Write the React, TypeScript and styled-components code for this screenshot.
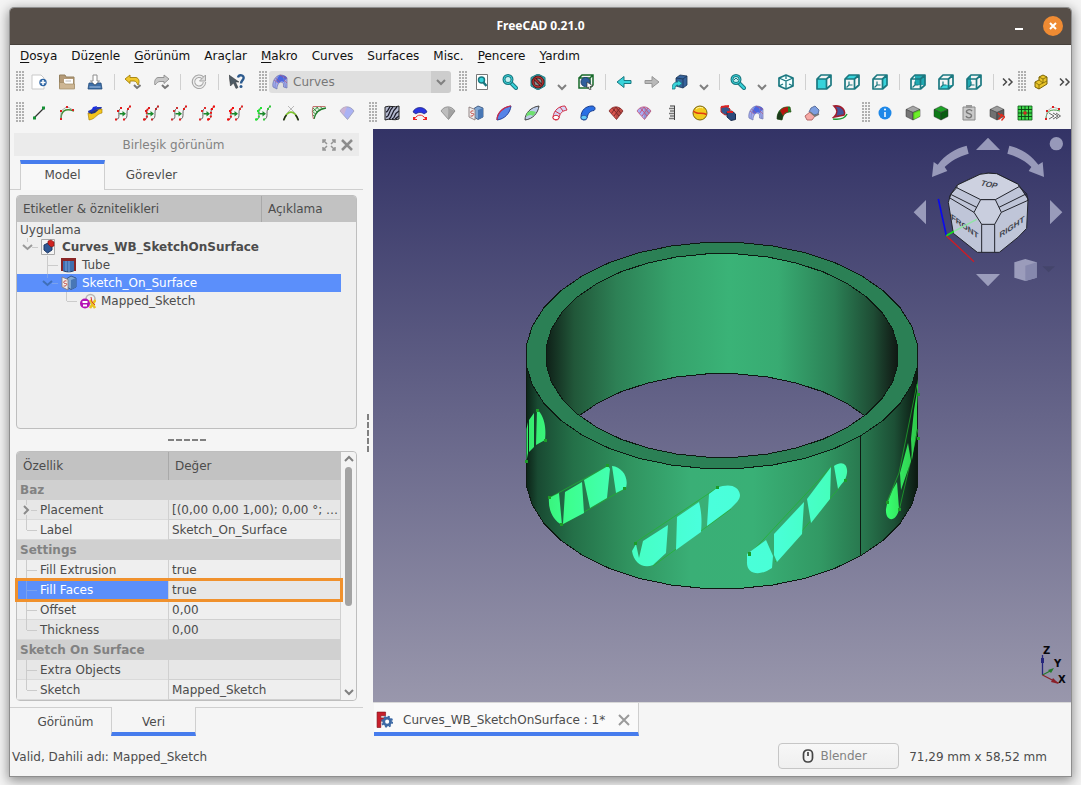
import React from "react";
import styled, { createGlobalStyle, css } from "styled-components";

const Global = createGlobalStyle`
  * { box-sizing: border-box; }
  body {
    margin: 0;
    background: #f4f4f4;
    font-family: "DejaVu Sans", Verdana, sans-serif;
    font-size: 12px;
    line-height: 16px;
    color: #4c4c4c;
  }
  button, select { font: inherit; color: inherit; }
`;

/* ---------- window frame ---------- */

const Desktop = styled.div`
  min-height: 100vh;
  padding: 8px 10px 9px;
  display: flex;
`;

const Window = styled.div`
  flex: 1;
  min-width: 0;
  display: flex;
  flex-direction: column;
  background: #f5f5f5;
  border-radius: 4px 4px 0 0;
  box-shadow: 0 0 0 1px #8e8e8e, 0 3px 12px 2px rgba(0, 0, 0, 0.42);
`;

const TitleBar = styled.header`
  height: 37px;
  display: grid;
  grid-template-columns: 1fr auto 1fr;
  align-items: center;
  padding: 0 8px;
  background: #564e48;
  border-bottom: 1px solid #46403b;
  border-radius: 4px 4px 0 0;
`;

const Title = styled.h1`
  grid-column: 2;
  margin: 0;
  font: 700 12px/16px "Noto Sans", sans-serif;
  color: #fff;
`;

const WindowControls = styled.div`
  display: flex;
  justify-content: flex-end;
  align-items: center;
  gap: 14px;
`;

const FrameButton = styled.button<{ $round?: boolean }>`
  width: 20px;
  height: 20px;
  padding: 0;
  border: 0;
  border-radius: 50%;
  display: grid;
  place-items: center;
  background: ${(p) => (p.$round ? "#ef8b33" : "transparent")};
`;

/* ---------- menu ---------- */

const MenuBar = styled.nav`
  height: 22px;
  display: flex;
  align-items: center;
  gap: 14px;
  padding: 0 10px;
`;

const MenuItem = styled.button`
  padding: 0;
  border: 0;
  background: none;
  color: #111;
  white-space: nowrap;
`;

const Mnemonic = styled.span`
  text-decoration: underline;
  text-underline-offset: 2px;
`;

/* ---------- tool bars ---------- */

const ToolRow = styled.div<{ $tall?: boolean }>`
  height: ${(p) => (p.$tall ? 33 : 29)}px;
  display: flex;
  align-items: center;
  gap: 8px;
  padding-left: 6px;
  overflow: hidden;
`;

const ToolBar = styled.div`
  display: flex;
  align-items: center;
  flex: none;
`;

const Grip = styled.span`
  width: 9px;
  height: 21px;
  background:
    linear-gradient(90deg, transparent 2px, #f5f5f5 2px) 0 0 / 3px 3px,
    linear-gradient(#b0b0b0 2px, transparent 2px) 0 0 / 3px 3px;
`;

const ToolButton = styled.button`
  width: 28px;
  height: 26px;
  padding: 0;
  border: 0;
  background: none;
  display: grid;
  place-items: center;
`;

const SplitTool = styled.div`
  width: 48px;
  display: flex;
  align-items: center;
`;

const SplitArrow = styled.button`
  width: 20px;
  height: 26px;
  padding: 10px 0 0;
  border: 0;
  background: none;
  display: grid;
  place-items: center;
`;

const Divider = styled.span`
  width: 10px;
  height: 16px;
  background: linear-gradient(#d0d0d0, #d0d0d0) center / 1px 100% no-repeat;
`;

const More = styled.button`
  width: 20px;
  height: 26px;
  padding: 0;
  border: 0;
  background: none;
  display: grid;
  place-items: center;
`;

const Workbench = styled.label`
  display: flex;
  align-items: center;
  position: relative;
  width: 182px;
  height: 22px;
  margin-left: 1px;
  border-radius: 3px;
  background: linear-gradient(90deg, #dfdfdf 162px, #cdcdcd 162px);
  > svg { position: absolute; left: 3px; pointer-events: none; }
  > svg:last-child { left: auto; right: 5px; }
`;

const WorkbenchSelect = styled.select`
  width: 100%;
  height: 100%;
  padding: 0 24px;
  appearance: none;
  border: 0;
  background: none;
  color: #777;
`;

/* ---------- body ---------- */

const Body = styled.main`
  flex: 1;
  display: grid;
  grid-template-columns: 353px 10px minmax(0, 1fr);
`;

const Dock = styled.section`
  display: flex;
  flex-direction: column;
  padding-top: 4px;
`;

const DockTitle = styled.div`
  height: 23px;
  margin: 0 4px;
  padding: 0 5px;
  display: grid;
  grid-template-columns: 10px 1fr 36px;
  align-items: center;
  text-align: center;
  background: #ebebeb;
  color: #828282;
`;

const DockButtons = styled.div`
  display: flex;
  justify-content: flex-end;
  gap: 4px;
`;

const TinyButton = styled.button`
  padding: 0;
  border: 0;
  background: none;
  display: grid;
  place-items: center;
`;

const TabStrip = styled.div<{ $bottom?: boolean }>`
  display: flex;
  height: ${(p) => (p.$bottom ? 29 : 30)}px;
  margin-top: ${(p) => (p.$bottom ? 6 : 4)}px;
  &::before { content: ""; width: 10px; }
  &::after { content: ""; flex: 1; }
  &::before, &::after {
    border-${(p) => (p.$bottom ? "top" : "bottom")}: 1px solid #cfcfcf;
  }
`;

const Tab = styled.button<{ $on?: boolean; $bottom?: boolean; $width: number }>`
  width: ${(p) => p.$width}px;
  padding: 0;
  background: ${(p) => (p.$on && !p.$bottom ? "#f8f8f8" : "none")};
  border: 0 solid #cfcfcf;
  ${(p) => (p.$bottom ? "border-top-width" : "border-bottom-width")}: 1px;
  ${(p) => p.$on && css`
    border-width: 0 1px;
    ${p.$bottom ? "border-bottom" : "border-top"}: 4px solid #467ced;
    ${p.$bottom ? "padding-top" : "padding-bottom"}: 5px;
  `}
`;

const TreeBox = styled.div`
  flex: 1;
  margin: 5px 6px 0;
  border: 1px solid #bebebe;
  border-radius: 4px;
  background: #efefef;
`;

const TreeHeader = styled.div`
  height: 26px;
  display: grid;
  grid-template-columns: 244px 1fr;
  align-items: center;
  background: #c2c2c2;
  border-radius: 3px 3px 0 0;
  > span { padding: 0 6px; line-height: 26px; }
  > span + span { border-left: 1px solid #a9a9a9; }
`;

const Tree = styled.ul`
  list-style: none;
  margin: 0;
  padding: 0;
`;

const TreeRoot = styled.li`
  height: 16px;
  padding-left: 3px;
`;

const TreeItem = styled.li<{ $on?: boolean; $bold?: boolean }>`
  height: 18px;
  margin-right: 15px;
  display: flex;
  align-items: center;
  ${(p) => p.$on && css`background: #5b8ffb; color: #fff;`}
  ${(p) => p.$bold && css`font-weight: 700;`}
`;

const NodeIcon = styled.span`
  width: 21px;
  display: grid;
  justify-items: start;
`;

const HandleRow = styled.div`
  height: 22px;
  display: grid;
  place-items: center;
`;

const HandleColumn = styled.div`
  display: grid;
  place-items: center;
`;

const Dashes = styled.span<{ $vertical?: boolean }>`
  ${(p) => p.$vertical
    ? css`width: 2px; height: 38px; background: repeating-linear-gradient(#808080 0 6px, transparent 6px 8px);`
    : css`width: 38px; height: 2px; background: repeating-linear-gradient(90deg, #808080 0 6px, transparent 6px 8px);`}
`;

const PropertyBox = styled.div`
  margin: 0 6px;
  display: flex;
  border: 1px solid #bebebe;
  border-radius: 4px;
  background: #f5f5f5;
`;

const PropertyTable = styled.table`
  flex: 1;
  position: relative;
  z-index: 1;
  table-layout: fixed;
  width: 324px;
  border-collapse: separate;
  border-spacing: 0;
  th, td { padding: 0; text-align: left; font-weight: 400; }
`;

const HeadCell = styled.th<{ $width?: number }>`
  height: 28px;
  ${(p) => p.$width && css`width: ${p.$width}px;`}
  background: #c2c2c2;
  &:first-child { border-radius: 3px 0 0 0; }
  && { padding-left: 6px; }
  & + & { border-left: 1px solid #a9a9a9; }
`;

const GroupCell = styled.th`
  height: 20px;
  background: #d0d0d0;
  color: #828282;
  && { padding-left: 3px; font-weight: 700; }
`;

const PropertyRow = styled.tr<{ $shade?: boolean; $on?: boolean }>`
  background: ${(p) => (p.$shade ? "#e7e7e7" : "#efefef")};
  ${(p) => p.$on && css`
    outline: 3px solid #f0912d;
    outline-offset: -1px;
    > th { background: #5b8ffb; color: #fff; }
  `}
`;

const NameCell = styled.th`
  height: 20px;
  border-bottom: 1px solid #dadada;
`;

const NameInner = styled.span`
  display: flex;
  height: 19px;
  align-items: center;
`;

const ValueCell = styled.td`
  height: 20px;
  border: 0 solid #d0d0d0;
  border-width: 0 1px 1px;
  white-space: nowrap;
  && { padding-left: 3px; }
`;

const ScrollTrack = styled.div`
  width: 15px;
  display: flex;
  flex-direction: column;
  align-items: center;
  justify-content: space-between;
  padding: 2px 0 3px;
  background: #f3f3f3;
  border-radius: 0 4px 4px 0;
`;

const ScrollThumb = styled.span`
  width: 7px;
  height: 139px;
  margin: 3px 0 auto;
  border-radius: 4px;
  background: #a3a3a3;
`;

/* ---------- 3D view ---------- */

const ViewColumn = styled.section`
  display: flex;
  flex-direction: column;
`;

const Viewport = styled.div`
  flex: 1;
  position: relative;
  display: flex;
  background: linear-gradient(#333366, #9997ac);
`;

const Scene = styled.svg`
  flex: 1;
  width: 100%;
  min-width: 0;
`;

const NavCube = styled.svg`
  position: absolute;
  top: 0;
  right: 0;
`;

const AxisCross = styled.svg`
  position: absolute;
  right: 5px;
  bottom: 15px;
`;

const DocTabs = styled.div`
  height: 34px;
  display: flex;
  padding-left: 1px;
  border-top: 1px solid #d8d8d8;
`;

const DocTab = styled.div`
  width: 265px;
  display: flex;
  align-items: center;
  padding: 4px 8px 0 2px;
  background: #fafafa;
  border-right: 1px solid #cfcfcf;
  border-bottom: 4px solid #467ced;
  > span { flex: 1; padding-left: 10px; white-space: nowrap; }
`;

const StatusBar = styled.footer`
  height: 40px;
  display: flex;
  align-items: center;
  gap: 10px;
  padding: 0 24px 0 2px;
  > span { padding-top: 1px; }
  > span:first-child { flex: 1; }
`;

const NavStyle = styled.button`
  width: 121px;
  height: 26px;
  display: flex;
  align-items: center;
  justify-content: center;
  gap: 6px;
  padding: 0 8px 0 0;
  color: #828282;
  background: linear-gradient(#f7f7f7, #efefef);
  border: 1px solid #c6c6c6;
  border-radius: 4px;
`;

/* ---------- icons ---------- */

const Ico = ({ children, size = 16 }: { children: React.ReactNode; size?: number }) => (
  <svg width={size} height={size} viewBox="0 0 16 16" fill="none" aria-hidden="true">{children}</svg>
);

const Chevron = ({ dir = "down", color = "#808080", size = 10 }: { dir?: "down" | "up" | "right"; color?: string; size?: number }) => (
  <svg width={size} height={size} viewBox="0 0 10 10" fill="none" stroke={color} strokeWidth="2" aria-hidden="true">
    <path d={{ down: "M1 3L5 7L9 3", up: "M1 7L5 3L9 7", right: "M3 1L7 5L3 9" }[dir]} />
  </svg>
);

const teal = "#1b7880";
const cyan = "#37d3da";
const faces: Record<string, string> = {
  front: "M1 5H10.5V15H1Z",
  top: "M1 5L5 1H15L10.5 5Z",
  right: "M10.5 5L15 1V11L10.5 15Z",
  rear: "M5 1H15V11H5Z",
  bottom: "M1 15L5 11H15L10.5 15Z",
  left: "M1 5L5 1V11L1 15Z",
};

const ViewIcon = ({ face }: { face: string }) => (
  <Ico>
    <path d={faces[face]} fill={face === "rear" || face === "left" ? "#22a9b2" : cyan} />
    {face !== "front" && <path d="M5 7.500V11H8.500M5 11L2.500 13.500" stroke={teal} strokeWidth="1.200" />}
    <path d="M1 5H10.500V15H1ZM1 5L5 1H15V11L10.500 15M10.500 5L15 1" stroke={teal} strokeWidth="1.700" strokeLinejoin="round" />
  </Ico>
);

/* two sketched curves with an arrow from the left one to the right one */
const SketchPair = ({ left, right, dense }: { left: string; right: string; dense?: "left" | "right" | "both" }) => {
  const a = "M1 14.500C7 14 1 6 6 3";
  const b = "M9 14.500C15 13 9 5 15 1.500";
  return (
    <Ico>
      <path d={a} stroke="#555" strokeWidth=".9" />
      <path d={b} stroke="#555" strokeWidth=".9" />
      <g strokeWidth="2">
        {(dense === "left" || dense === "both") && <path d={a} stroke={left} strokeDasharray="1.800 1.800" />}
        {(dense === "right" || dense === "both") && <path d={b} stroke={right} strokeDasharray="1.800 1.800" />}
      </g>
      <path d="M0 13.500H2V15.500H0ZM2 5H4V7H2ZM5 2H7V4H5Z" fill={left} />
      <path d="M8 13.500H10V15.500H8ZM12 3H14V5H12ZM14 .5H16V2.500H14Z" fill={right} />
      <path d="M4.500 8H7.500V6L11 8.700L7.500 11.500V9.500H4.500Z" fill="#1b8a2c" />
    </Ico>
  );
};

const Fan = ({ fill, line, grid }: { fill: string; line: string; grid?: boolean }) => (
  <Ico>
    <path d="M1 6C4 1 11 0 15 6L8.500 14.500Z" fill={fill} stroke={line} strokeWidth=".8" strokeLinejoin="round" />
    <path d="M8.500 14.500C7 10 9 9 8 2.500L15 6Z" fill="#000" opacity=".14" />
    {grid && <path d="M4.500 3L11 11M8 2L13 8.500M12 3L6 11M8 2L3.500 8.500" stroke={line} />}
  </Ico>
);

const Box = ({ top, left, right, extra }: { top: string; left: string; right: string; extra?: React.ReactNode }) => (
  <Ico>
    <g stroke="#333" strokeWidth=".5" strokeLinejoin="round">
      <path d="M1 4.500L8 1L15 4.500L8 7.500Z" fill={top} />
      <path d="M1 4.500L8 7.500V15L1 11.500Z" fill={left} />
      <path d="M15 4.500L8 7.500V15L15 11.500Z" fill={right} />
    </g>
    {extra}
  </Ico>
);

const SketchSurface = () => (
  <Ico>
    <path d="M6 3.500L10 1L15 3V12L10 14.500L6 12Z" fill="#7fa6d2" stroke="#2c4770" strokeWidth=".8" />
    <path d="M10 5L15 3V12L10 14.500Z" fill="#4877b5" />
    <path d="M1 2L7 4.500V15L1 12Z" fill="#eee" stroke="#8a7a7a" strokeWidth=".9" />
    <path d="M5.500 6C2 5 2 9 4.500 8.500S5.500 12 2.500 11" stroke="#c4473f" />
  </Ico>
);

const WorkbenchIcon = () => (
  <Ico>
    <path d="M1 13C0 8 3 2 8 1C11 1 14 2 15 4V14L11.500 13C12 10 11 8 9 8C7 8 5 11 5 15Z" fill="#a3abee" stroke="#6a72ae" strokeWidth=".7" />
    <path d="M7 1.500C11 1 14 2 15 4L11.500 8C10 7 9 7 7 9L4 7Z" fill="#4b66e0" />
    <path d="M6 2C4 5 3 9 3 14M11 1.500C12 5 13 9 13.500 13.500" stroke="#7a86c8" strokeWidth=".8" />
    <path d="M2 6L6 9M3.500 4L8 8M8 1L15 4.500M12 6L15 9" stroke="#b8506e" strokeWidth=".6" />
  </Ico>
);

const magnifier = (
  <>
    <path d="M9 9L14 14" stroke={teal} strokeWidth="4" strokeLinecap="round" />
    <path d="M9 9L14 14" stroke={cyan} strokeWidth="2" strokeLinecap="round" />
    <circle cx="6" cy="5.500" r="4" stroke={teal} strokeWidth="3" fill="#c5f0f0" />
    <circle cx="6" cy="5.500" r="4" stroke={cyan} strokeWidth="1" />
  </>
);

const arrowBox = (
  <>
    <path d="M4 4L8 1L15 2V11L11 14L4 12Z" fill="#35629b" stroke="#1b3555" strokeWidth=".8" />
    <path d="M4 4L11 5L15 2M11 5V14" stroke="#1b3555" strokeWidth=".8" />
    <path d="M0 15C0 10 2 8 6 8V6L10 9.500L6 12.500V11C4 11 3 12 3 15Z" fill={cyan} stroke={teal} strokeWidth=".8" />
  </>
);

const icons: Record<string, React.ReactNode> = {
  "New": <Ico><path d="M1 1H10L13 4V15H1Z" fill="#fff" stroke="#c9c9c9" /><circle cx="12" cy="8.500" r="3.700" fill="#2f66a5" /><path d="M12 6V11M9.500 8.500H14.500" stroke="#fff" strokeWidth="1.500" /></Ico>,
  "Open": <Ico><path d="M0.500 1H6L7 3H15V14H.5Z" fill="#b59b78" stroke="#94805f" /><path d="M5 5H14V10H5Z" fill="#fff" /><path d="M6.500 7H12" stroke="#bbb" /><path d="M.5 8.500H5L6 10H15.500V15H.5Z" fill="#cdb694" stroke="#a28c69" strokeWidth=".7" /></Ico>,
  "Save": <Ico><path d="M6 1H10V7H12.500L8 11L3.500 7H6Z" fill="#fff" stroke="#8c8c8c" /><path d="M2 9L1 15H15L14 9H11L8 11.500L5 9Z" fill="#3d6fa8" stroke="#234b7a" strokeWidth=".8" /><path d="M2.500 13H13.500" stroke="#a8c3e2" /></Ico>,
  "Undo": <Ico><path d="M0 5L5 1V3.500H11C14 4 15 8 13 11C12 9 11 7 9 7H5V9.500Z" fill="#f0c72d" stroke="#a17f0a" strokeWidth=".9" /><path d="M9 11L12 14L15.500 11" stroke="#777" strokeWidth="2" /></Ico>,
  "Redo": <Ico><path d="M16 5L11 1V3.500H5C2 4 1 8 2 11C4 9 5 7.500 7 7.500H11V9.500Z" fill="#c8c8c8" stroke="#8c8c8c" strokeWidth=".9" /><path d="M9 11L12 14L15.500 11" stroke="#777" strokeWidth="2" /></Ico>,
  "Refresh": <Ico><path d="M13.500 8A5.500 5.500 0 1 1 12 4" stroke="#a5a5a5" strokeWidth="3.500" /><path d="M13.500 8A5.500 5.500 0 1 1 12 4" stroke="#eee" strokeWidth="1.500" /><path d="M14.500 1V7H8.500Z" fill="#ddd" stroke="#a5a5a5" /></Ico>,
  "What's this": <Ico><path d="M0 1L10 8H6.500L9 13.500L7 14.500L4.500 9L1.500 12Z" fill="#4d5a64" stroke="#333" strokeWidth=".5" /><path d="M9 3.500C10 0 15.500 1 14.500 4.500C14 6.500 12 6.500 12 9.500" stroke="#2c5a8e" strokeWidth="2.400" /><circle cx="12" cy="12.500" r="1.500" fill="#2c5a8e" /></Ico>,
  "Fit all": <Ico><path d="M2.500 .5H13.500V15.500H2.500Z" fill="#fff" stroke="#777" /><circle cx="7.500" cy="6" r="3" fill={cyan} stroke={teal} strokeWidth="1.500" /><path d="M9.500 8.500L12.500 12" stroke={teal} strokeWidth="2.500" /></Ico>,
  "Fit selection": <Ico>{magnifier}</Ico>,
  "Draw style": <Ico><path d="M8 0L15 3.500V12L8 16L1 12V3.500Z" fill="#3aa9b0" stroke={teal} /><circle cx="8" cy="8" r="5" fill="#8b8f90" stroke="#3a1818" strokeWidth="3" /><circle cx="8" cy="8" r="5" stroke="#b83232" strokeWidth="1.400" /><path d="M4.500 4.500L11.500 11.500" stroke="#3a1818" strokeWidth="3" /><path d="M4.500 4.500L11.500 11.500" stroke="#b83232" strokeWidth="1.400" /></Ico>,
  "Bounding box": <Ico><path d="M1 4H12V14H1ZM1 4L4 1H15V11L12 14M12 4L15 1" stroke="#17692a" strokeWidth="1.500" /><circle cx="7.500" cy="8" r="4.500" fill="#2f5e9c" stroke="#20426d" /><path d="M9 8L15 12L12 12.500L13 15.500L11.500 16L10.500 13L9 14Z" fill="#fff" stroke="#333" strokeWidth=".7" /></Ico>,
  "Back": <Ico><path d="M1 8L8 2.500V6.500H15V9.500H8V13.500Z" fill={cyan} stroke={teal} /></Ico>,
  "Forward": <Ico><path d="M15 8L8 2.500V6.500H1V9.500H8V13.500Z" fill="#b9b9b9" stroke="#969696" /></Ico>,
  "Linked object": <Ico>{arrowBox}</Ico>,
  "Zoom": <Ico>{magnifier}<path d="M4 6L6 4L8 6" stroke={teal} /></Ico>,
  "Isometric": <Ico><path d="M8 1L15 4V12L8 15L1 12V4Z" fill="#f2ffff" stroke={teal} strokeWidth="1.700" strokeLinejoin="round" /><path d="M1 4L8 7L15 4M8 7V15M8 1V5M5 10L1 12M11 10L15 12" stroke={teal} strokeWidth="1.300" /></Ico>,
  "Front": <ViewIcon face="front" />,
  "Top": <ViewIcon face="top" />,
  "Right": <ViewIcon face="right" />,
  "Rear": <ViewIcon face="rear" />,
  "Bottom": <ViewIcon face="bottom" />,
  "Left": <ViewIcon face="left" />,
  "Part": <Ico><path d="M2 8L6 6V3L10 1L14 3V10L6 15L2 13Z" fill="#eac52a" stroke="#7b6405" strokeLinejoin="round" /><path d="M6 3L10 5V9L6 11L2 8M10 5L14 3M6 11V15M10 9L14 7M6 6L10 9" stroke="#7b6405" strokeWidth=".8" /></Ico>,
  "Line": <Ico><path d="M3.500 12.500L12.500 3.500" stroke="#333" strokeWidth="1.300" /><path d="M2 11.500H5V14.500H2ZM11 1.500H14V4.500H11Z" fill="#159135" /></Ico>,
  "Curve edit": <Ico><path d="M2 14C2 6 6 3 15 6" stroke="#3d8e30" strokeWidth="1.500" /><path d="M2 14L2 6L8 1.500L14 5" stroke="#999" strokeWidth=".8" /><path d="M1 13H3V15H1ZM1 5H3V7H1ZM7 1H9V3H7ZM13 4H15V6H13Z" fill="#dd2020" /></Ico>,
  "Join curve": <Ico><path d="M1 6L10 2H15L13 6L6 9L2 10Z" fill="#2438b2" /><path d="M6 2L10 1L9 4L4 6Z" fill="#1b2fe0" /><path d="M1 8C5 10 7 4 15 4L15 8C9 9 9 14 2 15Z" fill="#f4c51d" stroke="#a17800" strokeWidth=".6" /><path d="M3 7C6 8 8 4 12 4.500L8 8L4 9Z" fill="#22307e" /></Ico>,
  "Split curve": <SketchPair left="#e01b1b" right="#e01b1b" />,
  "Discretize": <SketchPair left="#e01b1b" right="#c02a2a" dense="left" />,
  "Extend curve": <SketchPair left="#c33" right="#e01b1b" />,
  "Approximate": <SketchPair left="#e02b2b" right="#f01010" dense="right" />,
  "Interpolate": <SketchPair left="#f01010" right="#e02b2b" dense="left" />,
  "Parametric": <SketchPair left="#25e335" right="#35c73d" dense="left" />,
  "Blend curve": <Ico><path d="M1 15C4 4.500 12 4.500 15 15" stroke="#7dc52c" strokeWidth="1.800" /><path d="M.5 15.500C1.500 12.500 2.500 11 3.500 10M15.500 15.500C14.500 12.500 13.500 11 12.500 10" stroke="#222" strokeWidth="1.500" /><path d="M4 8L11 1M12 8L5 1" stroke="#aaa" strokeWidth=".8" /></Ico>,
  "Comb plot": <Ico><path d="M3 14C4 8 8 4 15 3L13 1.500H2C1 4 1 8 3 14Z" fill="#dfeedd" /><path d="M3 14C4 8 8 4 15 3" stroke="#237d2c" strokeWidth="1.300" /><path d="M3.500 11L1.500 10M4.500 9L1 6M6 7L2 3M8.500 5L5 1.500M12 4L9 1.500M2 6L7 2" stroke="#237d2c" strokeWidth=".8" /><path d="M2.500 14C1 10 1 4 2 1.500H14.500" stroke="#b55" strokeWidth=".8" /></Ico>,
  "Iso curve": <Ico><path d="M1 6C4 1 11 0 15 6L8.500 14.500Z" fill="#aab2f4" stroke="#9a9ab4" strokeWidth=".8" /><path d="M1 6C3 2.500 6 1.500 8 1.500L5 10Z" fill="#d8b4c8" opacity=".7" /></Ico>,
  "Zebra": <Ico><path d="M1 2C5 0 11 3 15 1V14C10 16 5 13 1 15Z" fill="#b4b9cf" stroke="#222" /><path d="M2 12C6 12 4 6 9 2M5 14C9 12 6 8 13 2M8 14C12 13 9 9 15 6M2 7C4 7 4 4 6 2M11 14C13 13 13 12 15 11" stroke="#1b1b28" strokeWidth="1.300" /></Ico>,
  "Trim face": <Ico><path d="M1 7C3 1 13 1 15 7L12 9C10 7 6 7 4 9Z" fill="#2a35e0" stroke="#1a1f7a" strokeWidth=".7" /><path d="M3 13.500C5 9 11 9 13 13.500" stroke="#e33" strokeWidth="1" /><path d="M1 12H3V14H5V15H1ZM15 12H13V14H11V15H15Z" fill="#e22" /></Ico>,
  "Solid": <Fan fill="#bdbdbd" line="#888" />,
  "Sketch on surface": <SketchSurface />,
  "Sweep": <Ico><path d="M1 15C1 8 7 2 15 1C14 8 9 14 1 15Z" fill="#5684e8" stroke="#22409c" /><path d="M1 15C1 8 7 2 15 1" stroke="#cc2a4a" strokeWidth="1.200" /></Ico>,
  "Profile": <Ico><path d="M1 15C1 8 7 2 15 1C14 8 9 14 1 15Z" fill="#bccbe8" stroke="#444" /><path d="M3 8C6 5 9 6 12 7L9 11C7 9 4 10 2 12Z" fill="#6fe06f" /></Ico>,
  "Pipe": <Ico><path d="M1 12C2 5 7 1 13 1L15 5C10 6 8 8 7 13A3 2.500 0 0 1 1 12Z" fill="#d5d5f5" stroke="#d32d44" /><ellipse cx="4" cy="12.500" rx="3" ry="2.200" stroke="#d32d44" fill="#fff" /><path d="M3 6L8 9M8 2L11 6" stroke="#d32d44" /></Ico>,
  "Birail": <Ico><path d="M1 12C1 5 6 1 12 1C15 1 16 4 14 5.500C10 6 8 8 7 13A3 2.500 0 0 1 1 12Z" fill="#2a6fe5" stroke="#173a8a" /><ellipse cx="4" cy="12.500" rx="3" ry="2.200" fill="#62c8f5" stroke="#173a8a" strokeWidth=".6" /></Ico>,
  "Gordon": <Fan fill="#d8554e" line="#7e2a2a" grid />,
  "Gordon blend": <Fan fill="#a8aef5" line="#c5567a" grid />,
  "Segment": <Ico><path d="M6 1H11M5 3.500H11M6 6H11M5 8.500H11M6 11H11M5 13.500H11" stroke="#777" strokeWidth="1.500" /><path d="M10.500 1V15" stroke="#444" /></Ico>,
  "Compress": <Ico><circle cx="8" cy="8" r="7" fill="#f2cb1d" stroke="#7a650d" /><path d="M1.500 6C5 10 10 7 14.500 9.500" stroke="#e03a12" strokeWidth="1.500" /><path d="M4 4C6 2 9 2 11 3" stroke="#fff6b0" /></Ico>,
  "Surface split": <Ico><path d="M1 2L6 1L10 4V9L5 10L1 7Z" fill="#35578c" stroke="#c32222" /><path d="M7 7L12 6L15.500 9V14.500L11 15.500L7 12Z" fill="#2c4a7c" stroke="#1b2c4c" /><path d="M1 2L9 1M7 7L13 7" stroke="#dd2222" strokeWidth="2" /></Ico>,
  "Surface curves": <WorkbenchIcon />,
  "Flatten": <Ico><path d="M1 14C1 6 6 1 14 2L15 7C10 7 7 9 6 15Z" fill="#1e8a27" stroke="#2a4d16" strokeWidth=".7" /><path d="M4 6C6 3 9 2 12 2L12 7C9 7 8 9 7 11Z" fill="#b5160f" /><path d="M1 14C1 10 2 8 4 6L7 11L6 15Z" fill="#1c3a1a" /></Ico>,
  "Rotation sweep": <Ico><path d="M7 3L11 1L15 5L14 9L9 10L5 7Z" fill="#7e9fe0" stroke="#5b6f9e" /><path d="M1 11L6 7L11 11L8 15H3Z" fill="#f6a9a5" stroke="#b56a6a" /><path d="M6 7L11 11L15 9" stroke="#777" strokeWidth="1.500" /></Ico>,
  "Truncate": <Ico><path d="M2 1C10 0 14 6 12 10L2 12C6 8 6 5 2 1Z" fill="#44549a" stroke="#a11c2c" strokeWidth="1.600" /><path d="M1 14C8 15 13 13 15 9" stroke="#1d9a32" strokeWidth="1.500" /></Ico>,
  "Info": <Ico><circle cx="8" cy="8" r="6.500" fill="#1e88e8" /><path d="M8 7V12" stroke="#fff" strokeWidth="1.500" /><circle cx="8" cy="4.500" r="1" fill="#fff" /></Ico>,
  "Object": <Box top="#a6a6a6" left="#757575" right="#5bd322" extra={<path d="M9.500 8.500L15 6V11L9.500 14Z" fill="#6ff02a" />} />,
  "Shape": <Box top="#1ea326" left="#0d7a17" right="#0a5d12" />,
  "Clipboard": <Ico><path d="M2 2H14V15H2Z" fill="#c9c9c9" stroke="#888" /><path d="M5 0H11V3H5Z" fill="#999" /><path d="M11 6C9 3.500 5 5 5.500 7C6 9 11 8.500 10.500 11S6 13.500 5 11" stroke="#777" strokeWidth="1.400" /></Ico>,
  "Extract": <Box top="#9d9d9d" left="#717171" right="#5c5c5c" extra={<path d="M9 8L12.500 11L9.500 14.500M12 9L15.500 12L12.500 15.500" stroke="#e22b1c" strokeWidth="1.300" />} />,
  "Grid": <Ico><path d="M1 1H15V15H1Z" fill="#3fd84b" stroke="#0d5c17" strokeWidth=".8" /><path d="M4.500 1V15M8 1V15M11.500 1V15M1 4.500H15M1 8H15M1 11.500H15" stroke="#0a4412" strokeWidth=".9" /><path d="M6.500 6.500H9.500V9.500H6.500Z" fill="#d32a1c" /></Ico>,
  "Sequence": <Ico><path d="M1 14C1 7 5 3 15 6" stroke="#4a9a48" /><path d="M1 14L2 6L8 2L14 4" stroke="#999" strokeWidth=".7" /><path d="M0 13H2V15H0ZM1 5H3V7H1ZM7 1H9V3H7ZM13 3H15V5H13Z" fill="#dd2020" /><path d="M4 8L9 11L4 14M8 8L13 11L8 14M11 8L15.500 11L11 14" stroke="#666" strokeWidth="1" /></Ico>,
};

const Tools = ({ names }: { names: string[] }) => (
  <>
    {names.map((name) => (
      <ToolButton key={name} aria-label={name}>{icons[name]}</ToolButton>
    ))}
  </>
);

const Split = ({ name }: { name: string }) => (
  <SplitTool>
    <ToolButton aria-label={name}>{icons[name]}</ToolButton>
    <SplitArrow aria-label={`${name} options`}><Chevron /></SplitArrow>
  </SplitTool>
);

const MoreTools = () => (
  <More aria-label="More tools">
    <svg width="12" height="8" viewBox="0 0 12 8" fill="none" stroke="#4a4a4a" strokeWidth="1.500"><path d="M1 0.500L4.500 4L1 7.500M6.500 0.500L10 4L6.500 7.500" /></svg>
  </More>
);

/* ---------- tree branches ---------- */

const Branch = ({ kind, width, height, light }: { kind: "tee" | "end" | "arrow" | "open"; width: number; height: number; light?: boolean }) => {
  const mid = height / 2;
  const x = width - 14;
  return (
    <svg width={width} height={height} viewBox={`0 0 ${width} ${height}`} fill="none" shapeRendering="crispEdges" aria-hidden="true">
      <path
        stroke={light ? "#7aa2ee" : "#cbcbcb"}
        d={`M${x + 0.5} 0V${kind === "end" ? mid : kind === "open" || kind === "arrow" ? mid - 5 : height}M${x + (kind === "open" || kind === "arrow" ? 5 : 1)} ${mid + 0.5}H${width - 3}${kind === "arrow" ? `M${x + 0.5} ${mid + 5}V${height}` : ""}`}
      />
      {kind === "open" && <path d={`M${x - 4} ${mid - 2}L${x + 0.5} ${mid + 2}L${x + 5} ${mid - 2}`} stroke={light ? "#3f6fb8" : "#9a9a9a"} strokeWidth="2" shapeRendering="auto" />}
      {kind === "arrow" && <path d={`M${x - 2} ${mid - 4}L${x + 2} ${mid}L${x - 2} ${mid + 4}`} stroke="#8a8a8a" strokeWidth="2" shapeRendering="auto" />}
    </svg>
  );
};

/* ---------- tube geometry ---------- */

const CX = 349;
const CY = 226.5;
const DEPTH = 120;

type Pt = [number, number];

const ring = (rx: number, ry: number, from: number, to: number, dy = 0): Pt[] => {
  const out: Pt[] = [];
  const step = from < to ? 10 : -10;
  for (let a = from; step > 0 ? a <= to : a >= to; a += step) {
    const r = (a * Math.PI) / 180;
    out.push([CX + rx * Math.cos(r), CY + dy + ry * Math.sin(r)]);
  }
  return out;
};

const poly = (pts: Pt[]) => pts.map((p) => p.map((n) => n.toFixed(1)).join(",")).join(" ");

const outerTop = ring(196.4, 113.4, 5, 355);
const innerTop = ring(176.6, 102, 5, 355);
const wall = [...ring(196.4, 113.4, -5, 185), ...ring(196.4, 113.4, 185, -5, DEPTH)];
const innerBottom = ring(176.6, 102, 185, 355, DEPTH);

const TubeScene = () => (
  <Scene viewBox="0 0 698 573" role="img" aria-label="Tube">
    <defs>
      <linearGradient id="wall" gradientUnits="userSpaceOnUse" x1="153" x2="545">
        <stop offset="0" stopColor="#0c2217" /><stop offset=".03" stopColor="#194a32" /><stop offset=".12" stopColor="#247048" />
        <stop offset=".26" stopColor="#30935f" /><stop offset=".42" stopColor="#3aaf76" /><stop offset=".58" stopColor="#39b076" />
        <stop offset=".75" stopColor="#329964" /><stop offset=".86" stopColor="#28774e" /><stop offset=".94" stopColor="#1c4f35" /><stop offset="1" stopColor="#0b1710" />
      </linearGradient>
      <linearGradient id="bore" gradientUnits="userSpaceOnUse" x1="173" x2="525">
        <stop offset="0" stopColor="#0f2018" /><stop offset=".08" stopColor="#215739" /><stop offset=".2" stopColor="#2d8055" />
        <stop offset=".36" stopColor="#36a36c" /><stop offset=".52" stopColor="#3ab377" /><stop offset=".66" stopColor="#38ab72" />
        <stop offset=".82" stopColor="#2b8055" /><stop offset=".93" stopColor="#1e4c34" /><stop offset="1" stopColor="#101713" />
      </linearGradient>
      <linearGradient id="hole" gradientUnits="userSpaceOnUse" x1="0" x2="0" y1="0" y2="573">
        <stop offset="0" stopColor="#333366" /><stop offset="1" stopColor="#9997ac" />
      </linearGradient>
      <linearGradient id="glow" gradientUnits="userSpaceOnUse" x1="150" x2="545" y1="0" y2="0">
        <stop offset="0" stopColor="#35e868" /><stop offset=".12" stopColor="#3dff90" /><stop offset=".28" stopColor="#46ffc4" />
        <stop offset=".45" stopColor="#4affdc" /><stop offset=".65" stopColor="#49ffd6" /><stop offset=".8" stopColor="#44ffb8" /><stop offset=".92" stopColor="#38ff70" /><stop offset="1" stopColor="#2fc84a" />
      </linearGradient>
      <clipPath id="boreClip"><polygon points={poly(innerTop)} /></clipPath>
    </defs>
    <g stroke="#0d1a12" strokeWidth="1" shapeRendering="crispEdges">
      <polygon points={poly(wall)} fill="url(#wall)" />
      <polygon points={poly(outerTop)} fill="#2b8055" />
      <polygon points={poly(innerTop)} fill="url(#bore)" />
      <g clipPath="url(#boreClip)">
        <polygon points={poly([...innerBottom, [525, 500], [173, 500]])} fill="url(#hole)" />
      </g>
      <polygon points={poly(innerTop)} fill="none" />
      <path d="M487.500 306V426" />
    </g>
    <g stroke="#1fb52c" strokeWidth="1" fill="none" opacity=".7">
      <path d="M176 369L235 337M190 395L253 359M263 413L344 359M280 437L358 380M377 425L459 337M402 433L467 358M514 373L526 344L544 255M526 382L545 300" />
    </g>
    <g fill="url(#glow)">
      <path d="M164 281C170 284 174 298 172 311L163 316ZM161 284L156 291V323L161 318ZM155 293L153.500 300V332L155 324Z" />
      <path d="M176 369L186 364L189 396C180 391 175 381 176 369ZM192 363L209 353L211 384L190 395ZM211 351L235 337L237 340L234 369L217 379ZM239 337C249 338 256 348 253 359L243 364Z" />
      <path d="M263 415L266 429L270 412L295 396L293 424L280 436C270 440 261 434 259 422ZM304 388L326 373C330 388 328 400 328 403L303 421ZM336 365L344 359C356 354 366 357 367 366C367 371 363 374 357 380L334 397Z" />
      <path d="M374 425L393 411L400 427L399 439C386 448 373 445 374 432ZM401 405L431 373L429 405L404 433L401 426ZM434 370L458 338L457 370L438 394ZM461 337C469 331 475 335 474 344C473 352 468 355 465 360Z" />
      <path d="M514 375L520 360L524 353L526 380C524 393 512 394 513 380ZM527 344L535 314L538 332L528 361ZM538 310L541 281L544 262V300L539 331ZM544 258L545 250V278Z" />
    </g>
    <g fill="#1c9c28">
      <path d="M175 367H178V370H175ZM187 394H190V397H187ZM233 335H236V338H233ZM250 358H253V361H250ZM343 357H346V360H343ZM261 413H264V416H261ZM375 423H378V427H375ZM471 350H474V353H471ZM513 372H516V375H513ZM525 379H528V382H525ZM544 264H547V267H544ZM544 308H547V311H544ZM171 310H174V313H171ZM152 331H155V334H152ZM163 280H166V283H163Z" />
    </g>
  </Scene>
);

const CubeText = styled.text`
  font: 700 24px "Liberation Sans", sans-serif;
  fill: #3d424b;
  text-anchor: middle;
`;

const NavigationCube = () => (
  <NavCube width="160" height="160" viewBox="33 12 480 480" role="img" aria-label="Navigation cube">
    <g fill="#a9abc8" opacity=".85">
      <path d="M228 75L264 38L300 75ZM228 447H300L264 484ZM78 225V298L41 262ZM450 225V298L487 262Z" />
      <path d="M200 62L206 86C175 95 152 108 134 126L142 138L96 156L101 111L113 119C135 90 165 70 200 62Z" />
      <path d="M328 62L322 86C353 95 376 108 394 126L386 138L432 156L428 111L415 119C393 90 363 70 328 62Z" />
      <circle cx="469" cy="56" r="20" />
      <path d="M343 412L376 402L410 412V458L376 468L343 458Z" />
    </g>
    <path d="M376 422L410 412V458L376 468Z" fill="#8688ad" />
    <path d="M427 424H465L446 442Z" fill="#44456b" />
    <g stroke="#22242c" strokeWidth="3" strokeLinejoin="round">
      <path d="M172 180L240 148Q264 142 290 146L355 178L384 222L380 310L355 336L298 382H232L160 325L145 232L152 208Z" fill="#bfc5d8" />
      <path d="M172 180L240 148Q264 142 290 146L355 178L357 185L286 224H242L170 188Z" fill="#cdd1e0" />
      <path d="M242 224H286L304 262L284 298H245L222 262Z" fill="#c9cede" />
      <path d="M172 186L152 208L148 218L222 262M357 185L380 206L384 226L304 262M245 298V382M284 298V382M152 208L230 247M380 206L297 247" fill="none" />
    </g>
    <g stroke="none">
      <CubeText transform="translate(264 186) rotate(12) skewX(-15)">TOP</CubeText>
      <CubeText transform="translate(194 312) skewY(36)">FRONT</CubeText>
      <CubeText transform="translate(336 314) skewY(-34)">RIGHT</CubeText>
    </g>
    <path d="M115 222L139 332" stroke="#0a0af0" strokeWidth="5" />
    <path d="M139 332L222 410" stroke="#d01c24" strokeWidth="4" />
    <path d="M139 332L162 319" stroke="#14e01c" strokeWidth="5" />
    <path d="M162 319L230 283" stroke="#8fe6a4" strokeWidth="4" />
  </NavCube>
);

const AxisText = styled.text`
  font: 700 10px "DejaVu Sans", sans-serif;
  fill: #08080c;
`;

/* ---------- data ---------- */

const menus: [string, string, string][] = [
  ["", "D", "osya"], ["Düz", "e", "nle"], ["", "G", "örünüm"], ["Araçlar", "", ""], ["", "M", "akro"],
  ["Curves", "", ""], ["Surfaces", "", ""], ["Misc.", "", ""], ["", "P", "encere"], ["", "Y", "ardım"],
];

type Prop = { name: string; value: string; kind: "tee" | "end" | "arrow"; shade?: boolean; on?: boolean };

const groups: { title: string; rows: Prop[] }[] = [
  { title: "Baz", rows: [
    { name: "Placement", value: "[(0,00 0,00 1,00); 0,00 °; …", kind: "arrow", shade: true },
    { name: "Label", value: "Sketch_On_Surface", kind: "end" },
  ] },
  { title: "Settings", rows: [
    { name: "Fill Extrusion", value: "true", kind: "tee" },
    { name: "Fill Faces", value: "true", kind: "tee", shade: true, on: true },
    { name: "Offset", value: "0,00", kind: "tee" },
    { name: "Thickness", value: "0,00", kind: "end", shade: true },
  ] },
  { title: "Sketch On Surface", rows: [
    { name: "Extra Objects", value: "", kind: "tee", shade: true },
    { name: "Sketch", value: "Mapped_Sketch", kind: "end" },
  ] },
];

export default function App() {
  return (
    <>
      <Global />
      <Desktop>
        <Window>
          <TitleBar>
            <Title>FreeCAD 0.21.0</Title>
            <WindowControls>
              <FrameButton aria-label="Minimize"><svg width="8" height="8"><path d="M0 6H8V8H0Z" fill="#fff" /></svg></FrameButton>
              <FrameButton $round aria-label="Close"><svg width="8" height="8"><path d="M1 1L7 7M7 1L1 7" stroke="#fff" strokeWidth="2" /></svg></FrameButton>
            </WindowControls>
          </TitleBar>

          <MenuBar>
            {menus.map(([a, b, c]) => (
              <MenuItem key={a + b + c}>{a}{b && <Mnemonic>{b}</Mnemonic>}{c}</MenuItem>
            ))}
          </MenuBar>

          <ToolRow>
            <ToolBar>
              <Grip />
              <Tools names={["New", "Open", "Save"]} />
              <Divider />
              <Tools names={["Undo", "Redo"]} />
              <Divider />
              <Tools names={["Refresh"]} />
              <Divider />
              <Tools names={["What's this"]} />
            </ToolBar>
            <ToolBar>
              <Grip />
              <Workbench>
                <WorkbenchIcon />
                <WorkbenchSelect aria-label="Workbench" defaultValue="Curves">
                  <option>Curves</option>
                </WorkbenchSelect>
                <Chevron />
              </Workbench>
            </ToolBar>
            <ToolBar>
              <Grip />
              <Tools names={["Fit all", "Fit selection"]} />
              <Split name="Draw style" />
              <Tools names={["Bounding box"]} />
              <Divider />
              <Tools names={["Back", "Forward"]} />
              <Split name="Linked object" />
              <Divider />
              <Split name="Zoom" />
              <Tools names={["Isometric"]} />
              <Divider />
              <Tools names={["Front", "Top", "Right"]} />
              <Divider />
              <Tools names={["Rear", "Bottom", "Left"]} />
              <Divider />
              <MoreTools />
              <Grip />
              <Tools names={["Part"]} />
              <MoreTools />
            </ToolBar>
          </ToolRow>

          <ToolRow $tall>
            <ToolBar>
              <Grip />
              <Tools names={["Line", "Curve edit", "Join curve", "Split curve", "Discretize", "Extend curve", "Approximate", "Interpolate", "Parametric", "Blend curve", "Comb plot", "Iso curve"]} />
            </ToolBar>
            <ToolBar>
              <Grip />
              <Tools names={["Zebra", "Trim face", "Solid", "Sketch on surface", "Sweep", "Profile", "Pipe", "Birail", "Gordon", "Gordon blend", "Segment", "Compress", "Surface split", "Surface curves", "Flatten", "Rotation sweep", "Truncate"]} />
            </ToolBar>
            <ToolBar>
              <Grip />
              <Tools names={["Info", "Object", "Shape", "Clipboard", "Extract", "Grid", "Sequence"]} />
            </ToolBar>
          </ToolRow>

          <Body>
            <Dock>
              <DockTitle>
                <span />
                <span>Birleşik görünüm</span>
                <DockButtons>
                  <TinyButton aria-label="Float">
                    <svg width="14" height="14" viewBox="0 0 14 14" stroke="#959595" strokeWidth="1.500" fill="none"><path d="M1 5V2H4M1 2L5 6M10 2H13V5M13 2L9 6M1 9V12H4M1 12L5 8M13 9V12H10M13 12L9 8" /></svg>
                  </TinyButton>
                  <TinyButton aria-label="Close panel">
                    <svg width="14" height="14" viewBox="0 0 14 14"><path d="M2 2L12 12M12 2L2 12" stroke="#8c8c8c" strokeWidth="2.500" /></svg>
                  </TinyButton>
                </DockButtons>
              </DockTitle>
              <TabStrip role="tablist">
                <Tab role="tab" $on $width={85}>Model</Tab>
                <Tab role="tab" $width={93}>Görevler</Tab>
              </TabStrip>

              <TreeBox>
                <TreeHeader><span>Etiketler &amp; öznitelikleri</span><span>Açıklama</span></TreeHeader>
                <Tree>
                  <TreeRoot>Uygulama</TreeRoot>
                  <TreeItem $bold>
                    <Branch kind="open" width={24} height={18} />
                    <NodeIcon>
                      <Ico><path d="M.5 .5H13.500V15.500H.5Z" fill="#f4f4f4" stroke="#a9a9a9" /><path d="M3 6L7 4L11 7V11L6.500 14L3 11Z" fill="#2f5793" stroke="#1c3763" /><path d="M7 2L10 1L13 3V7L10 8L7 5Z" fill="#cf2422" stroke="#7d1414" strokeWidth=".6" /></Ico>
                    </NodeIcon>
                    Curves_WB_SketchOnSurface
                  </TreeItem>
                  <TreeItem>
                    <Branch kind="tee" width={44} height={18} />
                    <NodeIcon>
                      <Ico><path d="M1 3V13C4 15.500 11 15.500 14 13V3Z" fill="#3f6fae" stroke="#22426e" /><path d="M5 4V14M8 4V15" stroke="#7ba4dc" /><path d="M0 1H15V4H0ZM0 4H2V14H0ZM13 4H15V14H13Z" fill="#8a2626" /></Ico>
                    </NodeIcon>
                    Tube
                  </TreeItem>
                  <TreeItem $on>
                    <Branch kind="open" width={44} height={18} light />
                    <NodeIcon><SketchSurface /></NodeIcon>
                    Sketch_On_Surface
                  </TreeItem>
                  <TreeItem>
                    <Branch kind="end" width={63} height={18} />
                    <NodeIcon>
                      <Ico><circle cx="10.500" cy="6" r="4.500" stroke="#b5b5b5" strokeWidth="1.500" /><circle cx="5" cy="10.500" r="5" fill="#b412b4" /><path d="M2.500 8H7.500V10H2.500ZM3 11.500H7V13.500H3Z" fill="#fff" /><path d="M10 7L15 15M15.500 7L10 15" stroke="#e8c320" strokeWidth="2.500" /><path d="M11 4L12 9L15 12" stroke="#d33" /></Ico>
                    </NodeIcon>
                    Mapped_Sketch
                  </TreeItem>
                </Tree>
              </TreeBox>

              <HandleRow><Dashes /></HandleRow>

              <PropertyBox>
                <PropertyTable>
                  <thead>
                    <tr><HeadCell $width={151}>Özellik</HeadCell><HeadCell>Değer</HeadCell></tr>
                  </thead>
                  {groups.map((g) => (
                    <tbody key={g.title}>
                      <tr><GroupCell colSpan={2}>{g.title}</GroupCell></tr>
                      {g.rows.map((r) => (
                        <PropertyRow key={r.name} $shade={r.shade} $on={r.on}>
                          <NameCell scope="row">
                            <NameInner><Branch kind={r.kind} width={23} height={20} light={r.on} />{r.name}</NameInner>
                          </NameCell>
                          <ValueCell>{r.value}</ValueCell>
                        </PropertyRow>
                      ))}
                    </tbody>
                  ))}
                </PropertyTable>
                <ScrollTrack><Chevron dir="up" /><ScrollThumb /><Chevron /></ScrollTrack>
              </PropertyBox>

              <TabStrip $bottom role="tablist">
                <Tab role="tab" $bottom $width={91}>Görünüm</Tab>
                <Tab role="tab" $bottom $on $width={85}>Veri</Tab>
              </TabStrip>
            </Dock>

            <HandleColumn><Dashes $vertical /></HandleColumn>

            <ViewColumn>
              <Viewport>
                <TubeScene />
                <NavigationCube />
                <AxisCross width="28" height="42" viewBox="0 0 28 42" role="img" aria-label="Axes">
                  <path d="M4.500 30V10" stroke="#26267c" strokeWidth="1.300" /><path d="M3 13H6V18H3Z" fill="#26267c" />
                  <path d="M4.500 30L14 25" stroke="#257a2c" strokeWidth="1.300" /><path d="M10 25L16 23L13 28Z" fill="#257a2c" />
                  <path d="M4.500 30L20 38" stroke="#8a1f28" strokeWidth="1.300" /><path d="M15 33L21 39L13 37Z" fill="#8a1f28" />
                  <AxisText x="5" y="9">Z</AxisText><AxisText x="16" y="22">Y</AxisText><AxisText x="20" y="38">X</AxisText>
                </AxisCross>
              </Viewport>
              <DocTabs>
                <DocTab>
                  <Ico size={17}><path d="M1 1H9V4.500H4.500V6.500H8V9.500H4.500V15.500H1Z" fill="#c81e2b" stroke="#7e0f18" strokeWidth=".6" /><circle cx="10.500" cy="10" r="3.200" stroke="#3d69a5" strokeWidth="2.600" fill="#fff" /><circle cx="10.500" cy="10" r="4.800" stroke="#3d69a5" strokeWidth="1.600" strokeDasharray="1.900 1.870" /></Ico>
                  <span>Curves_WB_SketchOnSurface : 1*</span>
                  <TinyButton aria-label="Close document">
                    <svg width="12" height="12" viewBox="0 0 12 12"><path d="M1 1L11 11M11 1L1 11" stroke="#9a9a9a" strokeWidth="2" /></svg>
                  </TinyButton>
                </DocTab>
              </DocTabs>
            </ViewColumn>
          </Body>

          <StatusBar>
            <span>Valid, Dahili adı: Mapped_Sketch</span>
            <NavStyle>
              <svg width="12" height="14" viewBox="0 0 12 14" fill="none" stroke="#444" strokeWidth="1.700"><rect x="1.500" y="1" width="9" height="12" rx="4" /><path d="M6 3V7" /></svg>
              Blender
            </NavStyle>
            <span>71,29 mm x 58,52 mm</span>
          </StatusBar>
        </Window>
      </Desktop>
    </>
  );
}
